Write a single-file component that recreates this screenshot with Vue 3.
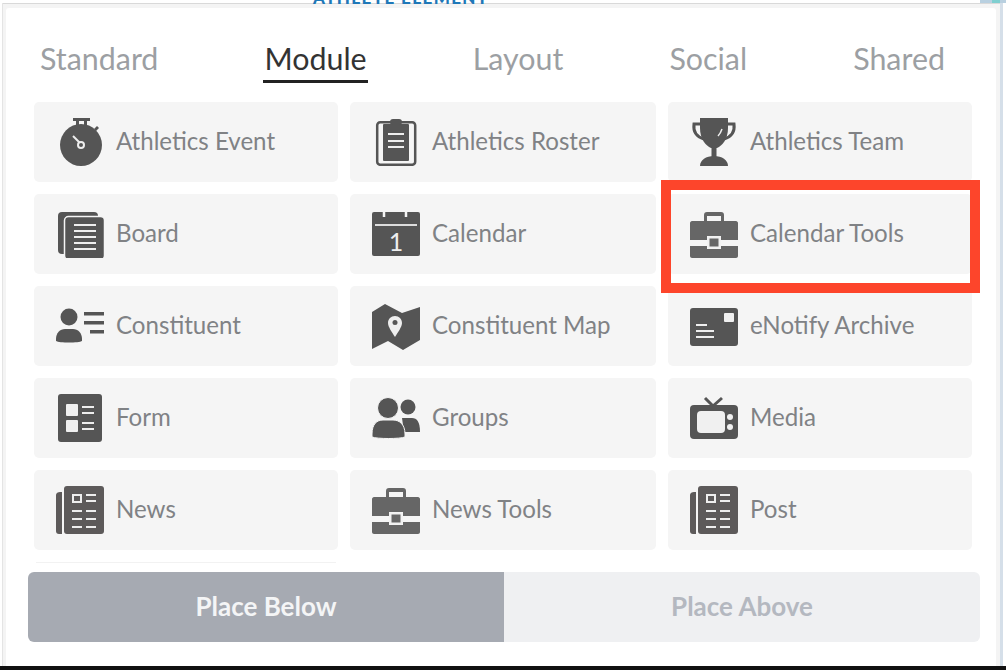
<script setup>
const tabs = ["Standard", "Module", "Layout", "Social", "Shared"];

const items = [
  { name: "Athletics Event", icon: "watch" },
  { name: "Athletics Roster", icon: "roster" },
  { name: "Athletics Team", icon: "trophy" },
  { name: "Board", icon: "board" },
  { name: "Calendar", icon: "calendar" },
  { name: "Calendar Tools", icon: "case" },
  { name: "Constituent", icon: "person" },
  { name: "Constituent Map", icon: "map" },
  { name: "eNotify Archive", icon: "mail" },
  { name: "Form", icon: "form" },
  { name: "Groups", icon: "groups" },
  { name: "Media", icon: "tv" },
  { name: "News", icon: "news" },
  { name: "News Tools", icon: "case" },
  { name: "Post", icon: "news" },
];
</script>

<template>
  <div class="page">
    <div class="behind">ATHLETE ELEMENT</div>
    <div class="corner"></div>
    <div class="shell">
      <div class="modal">
        <div class="tabs">
          <div v-for="t in tabs" :key="t" class="tab" :class="{ active: t === 'Module' }">{{ t }}</div>
        </div>

        <div class="grid">
          <div v-for="item in items" :key="item.name" class="tile">
            <svg class="icon" width="48" height="48" viewBox="0 0 48 48">
              <g v-if="item.icon === 'watch'" fill="#555">
                <rect x="17" y="0" width="17" height="3" />
                <rect x="20" y="3" width="3" height="4" />
                <rect x="28" y="3" width="3" height="4" />
                <path d="M38 11l3-3 2 2-3 3z" />
                <circle cx="25" cy="27" r="21" />
                <path d="M17 18l8 8" stroke="#eee" stroke-width="2" />
                <circle cx="25" cy="27" r="3" fill="#555" stroke="#eee" stroke-width="2" />
              </g>
              <g v-else-if="item.icon === 'roster'">
                <rect x="5.2" y="4.2" width="38" height="42.6" rx="3" fill="none" stroke="#555" stroke-width="2.5" />
                <rect x="11" y="6" width="26" height="37" rx="1" fill="#555" />
                <rect x="18" y="1" width="12" height="6" rx="3" fill="#555" />
                <path d="M16 16h16M16 23h16M16 29h16" stroke="#eee" stroke-width="2" />
              </g>
              <g v-else-if="item.icon === 'trophy'" fill="#555">
                <path d="M10 0h28v10c0 11-6 18-11 20h-6C16 28 10 21 10 10z" />
                <path d="M11 6H4c-1 8 3 13 10 15M37 6h7c1 8-3 13-10 15" fill="none" stroke="#555" stroke-width="3" />
                <rect x="21.500" y="29" width="5" height="10" />
                <path d="M10 48c0-6 6-10 14-10s14 4 14 10z" />
                <path d="M28 18c2-2 3-4 4-7" fill="none" stroke="#eee" stroke-width="1.500" />
              </g>
              <g v-else-if="item.icon === 'board'">
                <rect x="2" y="2" width="40" height="42" rx="4" fill="#555" />
                <rect x="8.500" y="6.500" width="40" height="43" rx="4" fill="#555" stroke="#f5f5f5" stroke-width="1.500" />
                <path d="M18 15h22M18 21h22M18 27h22M18 33h22M18 39h22" stroke="#eee" stroke-width="2" />
              </g>
              <g v-else-if="item.icon === 'calendar'">
                <rect x="0" y="2" width="48" height="44" rx="2" fill="#555" />
                <path d="M12 2v5M34 2v5" stroke="#f5f5f5" stroke-width="2.500" />
                <path d="M3 15h42" stroke="#ddd" stroke-width="2" />
                <text x="24" y="41" text-anchor="middle" class="day">1</text>
              </g>
              <g v-else-if="item.icon === 'case'" fill="#666">
                <path d="M14 11V5c0-2 1-3 3-3h14c2 0 3 1 3 3v6h-3V6H17v5z" />
                <path d="M2 11h44c1 0 2 1 2 2v17H31v-4H17v4H0V13c0-1 1-2 2-2z" />
                <path d="M0 36h17v3h14v-3h17v10c0 1-1 2-2 2H2c-1 0-2-1-2-2z" />
                <rect x="18.500" y="27.500" width="11" height="10" fill="#666" stroke="#f0f0f0" stroke-width="2" />
              </g>
              <g v-else-if="item.icon === 'person'" fill="#555">
                <circle cx="13" cy="15" r="8.500" />
                <path d="M0 37c0-6 4-10 9-10h8c5 0 9 4 9 10v2c-3 2-23 2-26 0z" />
                <path d="M28 10h20v3.500H28zM28 19h20v3.500H28zM34 28h14v3.500H34z" />
              </g>
              <g v-else-if="item.icon === 'map'">
                <path d="M0 10L13 2 30 11 48 5v33L31 48 16 39 0 47z" fill="#555" />
                <path d="M23 14c4 0 7 3 7 7 0 4-4 9-7 14-3-5-7-10-7-14 0-4 3-7 7-7z" fill="#eee" />
                <circle cx="23" cy="20.500" r="2.500" fill="#555" />
              </g>
              <g v-else-if="item.icon === 'mail'">
                <rect x="0" y="6" width="48" height="38" rx="3" fill="#555" />
                <rect x="34" y="11" width="10" height="9" rx="1" fill="#f0f0f0" />
                <path d="M6 23h11M6 29h18M6 35h18" stroke="#eee" stroke-width="1.800" />
              </g>
              <g v-else-if="item.icon === 'form'">
                <rect x="2" y="0" width="44" height="48" rx="3" fill="#555" />
                <rect x="10" y="10" width="12" height="12" rx="1" fill="#f0f0f0" />
                <rect x="10" y="26" width="12" height="12" rx="1" fill="#f0f0f0" />
                <path d="M26 13h12M26 19h12M26 29h12M26 35h12" stroke="#eee" stroke-width="2" />
              </g>
              <g v-else-if="item.icon === 'groups'" fill="#555">
                <circle cx="36" cy="13" r="7.500" />
                <path d="M30 24h10c5 0 8 4 8 14H32z" />
                <circle cx="16" cy="14" r="10.500" fill="#555" stroke="#f5f5f5" stroke-width="1" />
                <path d="M0 40c0-10 5-14 11-14h10c6 0 12 4 12 14v3c-5 2-28 2-33 0z" stroke="#f5f5f5" stroke-width="1" />
              </g>
              <g v-else-if="item.icon === 'tv'">
                <path d="M15 4l8 8 9-8" fill="none" stroke="#555" stroke-width="3" />
                <rect x="0" y="11" width="48" height="34" rx="4" fill="#555" />
                <rect x="7" y="17" width="28" height="22" rx="4" fill="#f0f0f0" />
                <circle cx="40" cy="23" r="3" fill="#f0f0f0" />
                <circle cx="40" cy="33" r="3" fill="#f0f0f0" />
              </g>
              <g v-else-if="item.icon === 'news'">
                <path d="M6 6v42H3c-2 0-3-1-3-3V9c0-2 2-3 4-3z" fill="#5d5a5a" />
                <rect x="8" y="0" width="40" height="48" rx="3" fill="#5d5a5a" />
                <rect x="17" y="9" width="8" height="7" fill="none" stroke="#eee" stroke-width="2" />
                <path d="M30 9h10M30 15h10M16 25h10M30 25h10M16 33h10M30 33h10M16 41h10M30 41h10" stroke="#eee" stroke-width="2" />
              </g>
            </svg>
            <span class="label">{{ item.name }}</span>
          </div>
        </div>

        <div class="rule"></div>

        <div class="place">
          <div class="place-btn on">Place Below</div>
          <div class="place-btn">Place Above</div>
        </div>
      </div>
    </div>
    <div class="bottom"></div>
    <div class="callout"></div>
  </div>
</template>

<style scoped>
.page {
  position: relative;
  width: 1006px;
  height: 670px;
  overflow: hidden;
  background: #fff;
  display: flex;
  flex-direction: column;
  font-family: Lato, "Liberation Sans", sans-serif;
}
.behind {
  position: absolute;
  left: 313px;
  top: -12px;
  font-size: 17px;
  line-height: 20px;
  font-weight: 900;
  letter-spacing: 1.4px;
  color: #1f78b8;
  white-space: nowrap;
  z-index: 2;
}
.corner {
  position: absolute;
  right: 0;
  top: 0;
  width: 26px;
  height: 3px;
  background: linear-gradient(90deg, #b9d0e0 0 46%, #7fcfd0 46% 77%, #b9d0e0 77%);
  z-index: 2;
}
.shell {
  flex: 1;
  min-height: 0;
  margin: 3px 6px 0 3px;
  padding: 4px 4px 0 3px;
  background: #f4f4f4;
  border-top: 1px solid #d9d9d9;
  box-shadow: -1px 0 0 #e4e4e4, 3px 0 0 #d5dfe9;
  display: flex;
}
.modal {
  flex: 1;
  background: #fff;
  padding-top: 32px;
  border-radius: 3px 3px 0 0;
}
.tabs {
  display: flex;
  justify-content: space-between;
  margin: 0 50px 19px 33px;
}
.tab {
  font-size: 30.4px;
  line-height: 36px;
  padding: 0 1px 4px;
  border-bottom: 3px solid transparent;
  color: #9c9fa3;
}
.tab.active {
  color: #333;
  border-bottom-color: #222;
}
.grid {
  display: grid;
  grid-template-columns: 304px 306px 304px;
  gap: 12px;
  margin: 0 24px 0 28px;
}
.tile {
  height: 80px;
  background: #f5f5f5;
  border-radius: 5px;
  display: flex;
  align-items: center;
  gap: 12px;
  padding-left: 22px;
}
.icon {
  flex: none;
}
.day {
  font-size: 25px;
  font-weight: 400;
  fill: #eee;
}
.label {
  font-size: 24.1px;
  color: #808285;
  white-space: nowrap;
  margin-top: -4px;
}
.rule {
  width: 300px;
  height: 1px;
  margin: 12px 0 9px 30px;
  background: #f2f2f2;
}
.place {
  display: flex;
  margin: 0 16px 0 22px;
  height: 70px;
}
.place-btn {
  flex: 1;
  display: flex;
  align-items: center;
  justify-content: center;
  font-size: 26px;
  font-weight: 700;
  padding-bottom: 2px;
  background: #eff0f2;
  color: #b4b8c0;
  border-radius: 0 6px 6px 0;
}
.place-btn.on {
  background: #a6aab2;
  color: #f4f5f6;
  border-radius: 6px 0 0 6px;
}
.bottom {
  flex: none;
  height: 4px;
  background: #111;
}
.callout {
  position: absolute;
  left: 661px;
  top: 180px;
  width: 319px;
  height: 113px;
  box-sizing: border-box;
  border: 10px solid #fd452b;
  z-index: 3;
}
</style>
